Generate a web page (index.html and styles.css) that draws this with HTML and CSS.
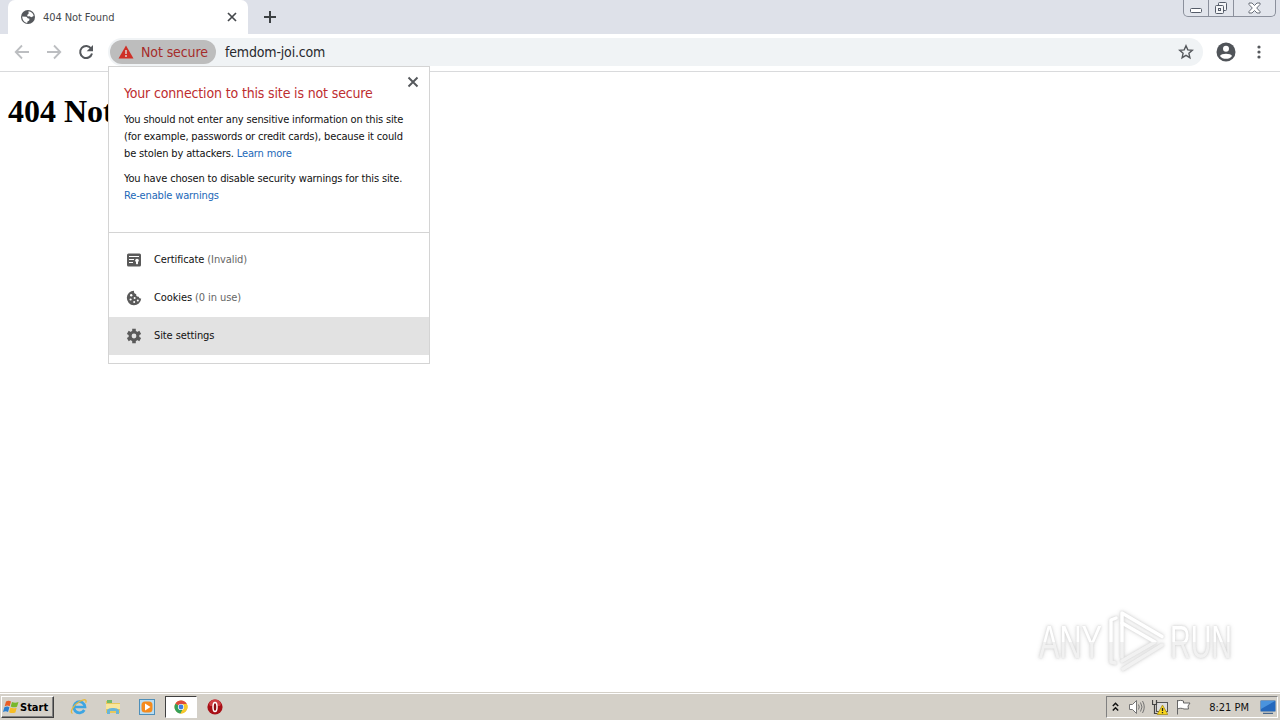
FILE: index.html
```html
<!DOCTYPE html>
<html lang="en">
<head>
  <meta charset="UTF-8" />
  <title>404 Not Found</title>
  <link rel="stylesheet" href="styles.css">
</head>
<body>
  <div class="tabstrip">
    <div class="tab">
      <svg class="favicon" width="16" height="16" viewBox="0 0 16 16"><circle cx="8" cy="8" r="7" fill="#55585c"/><path d="M2.200 7.500l4.300.3 1.200 1.500 1.800.5-.3 1.600-1.700 1-.3 1.600C4.500 13.600 2.300 11 2.200 7.500zM8.500 2.300c2.700.2 4.700 2 5.200 4.700l-2.500 1.200-1.500-1-2 .2-.6-1.500 1.500-1.200z" fill="#fff"/></svg>
      <span class="tab-title">404 Not Found</span>
      <svg class="tab-close" width="10" height="10" viewBox="0 0 10 10"><path d="M1 1l8 8M9 1L1 9" stroke="#45484c" stroke-width="1.700"/></svg>
    </div>
    <svg class="new-tab" width="14" height="14" viewBox="0 0 14 14"><path d="M7 1v12M1 7h12" stroke="#3c4043" stroke-width="2"/></svg>
    <div class="window-buttons">
      <span class="win-btn win-min"><svg width="13" height="6" viewBox="0 0 13 6"><rect x=".5" y=".5" width="11" height="4" rx="1" fill="#fff" stroke="#555c69"/></svg></span>
      <span class="win-btn win-max"><svg width="14" height="14" viewBox="0 0 14 14" fill="#f4f5f7" stroke="#555c69"><rect x="4.500" y="1.500" width="8" height="8" rx="1"/><rect x="1.500" y="4.500" width="8" height="8" rx="1"/><rect x="4.500" y="7.500" width="2" height="2"/></svg></span>
      <span class="win-btn win-close"><svg width="13" height="12" viewBox="0 0 13 12"><path d="M1 1h3l2.500 2.500L9 1h3v1.500L8.700 6 12 9.500V11H9L6.500 8.500 4 11H1V9.500L4.300 6 1 2.500z" fill="#fff" stroke="#686e79"/></svg></span>
    </div>
  </div>

  <div class="toolbar">
    <svg class="nav-icon" width="16" height="16" viewBox="0 0 16 16"><path d="M15 8H2M8 1.500L1.700 8 8 14.500" fill="none" stroke="#bcbec1" stroke-width="1.800"/></svg>
    <svg class="nav-icon" width="16" height="16" viewBox="0 0 16 16"><path d="M1 8h13M8 1.500L14.300 8 8 14.500" fill="none" stroke="#bcbec1" stroke-width="1.800"/></svg>
    <svg class="nav-icon reload" width="16" height="16" viewBox="0 0 16 16"><path d="M13.200 4.700A6 6 0 1 0 14 9.500" fill="none" stroke="#55585c" stroke-width="2"/><path d="M15 1v6.300H8.700z" fill="#55585c"/></svg>
    <div class="omnibox">
      <div class="chip">
        <svg width="16" height="14" viewBox="0 0 16 14"><path d="M8 .5L15.500 13.500H.5z" fill="#cf3027"/><path d="M8 5v4M8 10v2" stroke="#ddc0bd" stroke-width="1.700"/></svg>
        <span class="chip-text">Not secure</span>
      </div>
      <span class="url">femdom-joi.com</span>
      <svg class="star" width="16" height="16" viewBox="0 0 16 16"><path d="M8 1.800l1.800 4.100 4.500.4-3.400 3 1 4.400L8 11.400l-3.900 2.300 1-4.400-3.400-3 4.500-.4z" fill="none" stroke="#55585c" stroke-width="1.400"/></svg>
    </div>
    <svg class="avatar" width="20" height="20" viewBox="0 0 20 20"><circle cx="10" cy="10" r="9.500" fill="#505459"/><circle cx="10" cy="6.700" r="3" fill="#fff"/><path d="M4 14c1-3 11-3 12 0-2.500 3.800-9.500 3.800-12 0z" fill="#fff"/></svg>
    <svg class="menu-dots" width="4" height="14" viewBox="0 0 4 14" fill="#55585c"><circle cx="2" cy="2" r="1.600"/><circle cx="2" cy="7" r="1.600"/><circle cx="2" cy="12" r="1.600"/></svg>
  </div>

  <div class="page">
    <h1>404 Not Found</h1>
  </div>

  <div class="popup">
    <svg class="popup-close" width="12" height="12" viewBox="0 0 12 12"><path d="M1.500 1.500l9 9M10.500 1.500l-9 9" stroke="#55585c" stroke-width="1.900"/></svg>
    <div class="popup-info">
      <h2>Your connection to this site is not secure</h2>
      <p>You should not enter any sensitive information on this site<br>(for example, passwords or credit cards), because it could<br>be stolen by attackers. <a>Learn more</a></p>
      <p>You have chosen to disable security warnings for this site.<br><a>Re-enable warnings</a></p>
    </div>
    <div class="popup-menu">
      <div class="row">
        <svg width="16" height="16" viewBox="0 0 16 16"><rect x="1" y="1.500" width="14" height="13" rx="1.500" fill="#5a5a5a"/><path d="M3 4.500h10M3 7.500h5M3 10.500h4" stroke="#fff" stroke-width="1.200"/><circle cx="11" cy="8.500" r="1.800" fill="#fff"/><path d="M10 9h2v3.500l-1-.8-1 .8z" fill="#fff"/></svg>
        <span>Certificate <span class="muted">(Invalid)</span></span>
      </div>
      <div class="row">
        <svg width="16" height="16" viewBox="0 0 16 16"><path d="M8 .8a7.200 7.200 0 1 0 7.200 7.700c-1.400.2-2.300-.6-2.400-1.800-1.900.2-3-.8-2.600-2.600C8.500 4 7.700 2.700 8 .8z" fill="#5a5a5a"/><g fill="#fff"><circle cx="5.200" cy="5.300" r="1.200"/><circle cx="4.600" cy="9.500" r="1.100"/><circle cx="8.600" cy="8" r="1"/><circle cx="8.200" cy="12" r="1"/><circle cx="11.800" cy="10.600" r="1"/></g></svg>
        <span>Cookies <span class="muted">(0 in use)</span></span>
      </div>
      <div class="row active">
        <svg width="16" height="16" viewBox="0 0 16 16" fill="none" stroke="#5a5a5a"><circle cx="8" cy="8" r="3.900" stroke-width="3"/><path d="M8 .8v3M8 12.200v3M1.770 4.400l2.600 1.500M11.630 10.100l2.600 1.500M1.770 11.600l2.600-1.500M11.630 5.900l2.600-1.500" stroke-width="3.600"/></svg>
        <span>Site settings</span>
      </div>
    </div>
  </div>

  <svg class="watermark" width="206" height="72" viewBox="0 0 206 72">
    <defs>
      <linearGradient id="fade" gradientUnits="userSpaceOnUse" x1="0" y1="0" x2="0" y2="72">
        <stop offset=".5" stop-color="#fff"/>
        <stop offset=".5" stop-color="#f1f1f1"/>
      </linearGradient>
    </defs>
    <text x="5" y="52" textLength="63" lengthAdjust="spacingAndGlyphs">ANY</text>
    <g fill="none" stroke="url(#fade)" stroke-width="3.500" stroke-linejoin="round" stroke-linecap="round">
      <path d="M88 51V7l40 23.500"/>
      <path d="M88 17l33 19-33 19"/>
      <path d="M82 12l-5 2v42l4 1"/>
      <path d="M89 63l39-24"/>
    </g>
    <text x="136" y="52" textLength="62" lengthAdjust="spacingAndGlyphs">RUN</text>
  </svg>

  <div class="taskbar">
    <div class="start">
      <svg width="17" height="16" viewBox="0 0 17 16"><path d="M3 2.500c2-1.200 3.500-1 5 0L6.700 7.200c-1.500-1-3-1-5 0z" fill="#e85d25"/><path d="M9 3c2 1 4 1 6.500 0L14 7.700c-2.500 1-4.300.8-6.300-.2z" fill="#78b82a"/><path d="M1.400 8.300c2-1 3.500-1 5 0L5 13c-1.500-1-3-1-5 0z" fill="#2a7fd0"/><path d="M7.400 8.600c2 1 4 1 6.300.1l-1.300 4.700c-2.500 1-4.300.8-6.300-.2z" fill="#f6bd25"/></svg>
      <span>Start</span>
    </div>
    <div class="quick">
      <svg width="18" height="18" viewBox="0 0 18 18" fill="none"><path d="M14.300 12a5.600 5.600 0 1 1 .7-3H5" stroke="#3da5e2" stroke-width="2.700"/><path d="M2.500 15.500C-1 14 4 6.500 10 3.300c5-2.600 7-1.800 5.700 1.400" stroke="#e6b93c" stroke-width="1.300"/></svg>
      <svg width="18" height="18" viewBox="0 0 18 18"><path d="M2 3h5l1 2h8v10H2z" fill="#e9c85c"/><path d="M3 2h5v3H3z" fill="#74b96a"/><path d="M2 6h14v5H2z" fill="#f8e69c"/><path d="M3 16v-3.500c0-3.500 12-3.500 12 0V16h-3v-3H6v3z" fill="#69b5d8"/></svg>
      <svg width="18" height="18" viewBox="0 0 18 18"><rect x="1.500" y="1.500" width="15" height="15" fill="#b9ddf2" stroke="#4e8fb9"/><rect x="3.500" y="3.500" width="11" height="11" rx="3.500" fill="#f58b1d"/><path d="M7 5.500l5.500 3.500L7 12.500z" fill="#fff"/></svg>
      <div class="task-active">
        <svg width="14" height="14" viewBox="0 0 14 14"><circle cx="7" cy="7" r="6.500" fill="#e2ae22"/><path d="M7 7L1.400 3.700A6.500 6.500 0 0 1 12.800 4z" fill="#de4b3c"/><path d="M7 7L1.400 3.700A6.500 6.500 0 0 0 6.500 13.500L9.500 8z" fill="#35a05a"/><path d="M7 4h5.800A6.500 6.500 0 0 1 6.500 13.500L9.600 8z" fill="#f7c92c"/><circle cx="7" cy="7" r="3.100" fill="#fff"/><circle cx="7" cy="7" r="2.400" fill="#3f7ee0"/></svg>
      </div>
      <svg width="18" height="18" viewBox="0 0 18 18"><circle cx="9" cy="9" r="7.600" fill="#a80f16"/><path d="M3 6a6.300 6.300 0 0 1 12 0l-1 2H4z" fill="#cf3e43"/><ellipse cx="9" cy="9" rx="2" ry="4.600" fill="#8c0d12" stroke="#fff" stroke-width="1.500"/></svg>
    </div>
    <div class="tray">
      <svg class="chevrons" width="7" height="10" viewBox="0 0 7 10"><path d="M.8 4L3.500 1.300 6.200 4M.8 8.500l2.700-2.700 2.700 2.700" fill="none" stroke="#111" stroke-width="1.500"/></svg>
      <svg class="speaker" width="17" height="16" viewBox="0 0 17 16" fill="none" stroke="#747474"><path d="M1.500 5.500h3l4-4v13l-4-4h-3z" fill="#fff"/><path d="M10.500 5.500q1.500 2.500 0 5M12.500 3.500q3 4.500 0 9M14.500 2q3.500 6 0 12"/></svg>
      <svg class="network" width="16" height="16" viewBox="0 0 16 16"><rect x="4.500" y="3.500" width="11" height="9" fill="#ddd" stroke="#555"/><path d="M.5 1v4.500h4V1M2.500 5.500v9h3" fill="none" stroke="#444" stroke-width="1.200"/><path d="M10.500 6l5.300 9.500H5.200z" fill="#f7d51d" stroke="#9c8210" stroke-width=".7"/><path d="M10.500 9v3M10.500 13v1.300" stroke="#222" stroke-width="1.300"/></svg>
      <svg class="flag" width="17" height="16" viewBox="0 0 17 16"><path d="M2.500 1v14.500M2.500 2c2-.8 4-.8 6 0v2h6.500l-2 3 .5 3H9c-2-1-4.500-1-6.500 0" fill="#fff" stroke="#666"/></svg>
      <span class="clock">8:21 PM</span>
      <svg class="desktop" width="16" height="14" viewBox="0 0 16 14"><rect x=".5" y=".5" width="15" height="11" rx="1" fill="#2468bd" stroke="#7897b8"/><path d="M1 1h14L1 9z" fill="#4a93dd"/><path d="M3 13.300h10" stroke="#234b7b"/></svg>
    </div>
  </div>
</body>
</html>
```

FILE: styles.css
```css
body {
  margin: 0;
  height: 720px;
  display: flex;
  flex-direction: column;
  overflow: hidden;
  background: #fff;
  color: #111;
  font-family: "DejaVu Sans Condensed", "DejaVu Sans", sans-serif;
  font-stretch: condensed;
  font-size: 11px;
  white-space: nowrap;
}

svg {
  display: block;
  flex: none;
}

.tabstrip {
  display: flex;
  height: 34px;
  flex: none;
  box-sizing: border-box;
  padding: 0 4px 0 8px;
  background: #dee1e9;
}

.tab {
  display: flex;
  align-items: center;
  box-sizing: border-box;
  width: 240px;
  height: 34px;
  padding: 0 11px 0 12px;
  background: #fff;
  border-radius: 7px 7px 0 0;
}

.tab-title {
  margin-left: 7px;
  color: #45484c;
  letter-spacing: -0.1px;
}

.tab-close {
  margin-left: auto;
}

.new-tab {
  margin: 10px 0 0 15px;
}

.window-buttons {
  display: flex;
  box-sizing: border-box;
  width: 93px;
  height: 17px;
  margin-left: auto;
  border: 1px solid #8b909c;
  border-top: 0;
  border-radius: 0 0 5px 5px;
  background: #e2e5ec;
}

.win-btn {
  display: flex;
  align-items: center;
  justify-content: center;
  width: 25px;
  border-right: 1px solid #8b909c;
}

.win-min {
  align-items: flex-end;
  padding-bottom: 2px;
  box-sizing: border-box;
}

.win-max {
  width: 24px;
}

.win-close {
  flex: 1;
  border: 0;
}

.toolbar {
  display: flex;
  align-items: center;
  box-sizing: border-box;
  height: 38px;
  flex: none;
  padding: 0 19px 2px 14px;
  border-bottom: 1px solid #d9dadc;
}

.nav-icon {
  margin-right: 16px;
}

.omnibox {
  display: flex;
  align-items: center;
  box-sizing: border-box;
  flex: 1;
  height: 28px;
  margin-left: -2px;
  padding: 0 9px 0 2px;
  border-radius: 14px;
  background: #f0f3f5;
}

.chip {
  display: flex;
  align-items: center;
  box-sizing: border-box;
  width: 106px;
  height: 24px;
  padding-left: 8px;
  border-radius: 12px;
  background: #bdbdbd;
}

.chip-text {
  margin-left: 7px;
  color: #a52c2a;
  font-size: 14px;
  letter-spacing: -0.1px;
}

.url {
  margin-left: 9px;
  color: #27292d;
  font-size: 14px;
  letter-spacing: -0.17px;
}

.star {
  margin-left: auto;
}

.avatar {
  margin-left: 13px;
}

.menu-dots {
  margin-left: 21px;
}

.page {
  flex: 1;
  padding: 0 8px;
}

.page h1 {
  margin: 21px 0 0;
  color: #000;
  font: bold 32px/37px "Liberation Serif", serif;
}

/* site info bubble, hangs from the address bar over the page */
.popup {
  position: absolute;
  left: 108px;
  top: 66px;
  box-sizing: border-box;
  width: 322px;
  height: 298px;
  border: 1px solid #d4d4d4;
  background: #fff;
  letter-spacing: -0.15px;
}

.popup-close {
  position: absolute;
  top: 9px;
  right: 10px;
}

.popup-info {
  box-sizing: border-box;
  height: 166px;
  padding: 16px 0 0 15px;
  border-bottom: 1px solid #d4d4d4;
}

.popup-info h2 {
  margin: 0 0 8px;
  color: #bd2d2f;
  font-size: 14px;
  font-weight: normal;
  line-height: 20px;
}

.popup-info p {
  margin: 0 0 8px;
  line-height: 17px;
}

.popup-info a {
  color: #2268b8;
}

.popup-menu {
  padding-top: 8px;
}

.row {
  display: flex;
  align-items: center;
  gap: 12px;
  height: 38px;
  padding: 0 0 0 17px;
  letter-spacing: -0.1px;
}

.row.active {
  background: #e2e2e2;
}

.row .muted {
  color: #666;
}

.row > span {
  margin-bottom: 2px;
}

.watermark {
  position: absolute;
  left: 1034px;
  top: 606px;
  filter: drop-shadow(0 0 1px #d2d2d2) drop-shadow(0 0 2px #e2e2e2);
}

.watermark text {
  fill: url(#fade);
  font: 46px "Liberation Sans", sans-serif;
}

.taskbar {
  display: flex;
  align-items: center;
  box-sizing: border-box;
  height: 28px;
  flex: none;
  padding: 1px 2px 0 1px;
  border-top: 1px solid #d4d0c8;
  box-shadow: inset 0 1px #fff;
  background: #d4d0c8;
}

.start {
  display: flex;
  align-items: center;
  box-sizing: border-box;
  width: 53px;
  height: 22px;
  padding-left: 1px;
  border: 1px solid;
  border-color: #fff #404040 #404040 #fff;
  box-shadow: inset -1px -1px #808080;
  color: #000;
  font-weight: bold;
}

.quick {
  display: flex;
  align-items: center;
  margin-left: 16px;
  gap: 16px;
}

.task-active {
  display: flex;
  align-items: center;
  justify-content: center;
  box-sizing: border-box;
  width: 32px;
  height: 22px;
  margin: 0 -7px;
  border: 1px solid;
  border-color: #404040 #fff #fff #404040;
  background: #fff;
}

.tray {
  display: flex;
  align-items: center;
  box-sizing: border-box;
  width: 172px;
  height: 22px;
  margin-left: auto;
  padding: 0 1px 0 5px;
  border: 1px solid;
  border-color: #808080 #fff #fff #808080;
}

.speaker {
  margin-left: 9px;
}

.network {
  margin-left: 7px;
}

.flag {
  margin-left: 7px;
}

.clock {
  margin-left: auto;
}

.desktop {
  margin-left: 11px;
}
```
